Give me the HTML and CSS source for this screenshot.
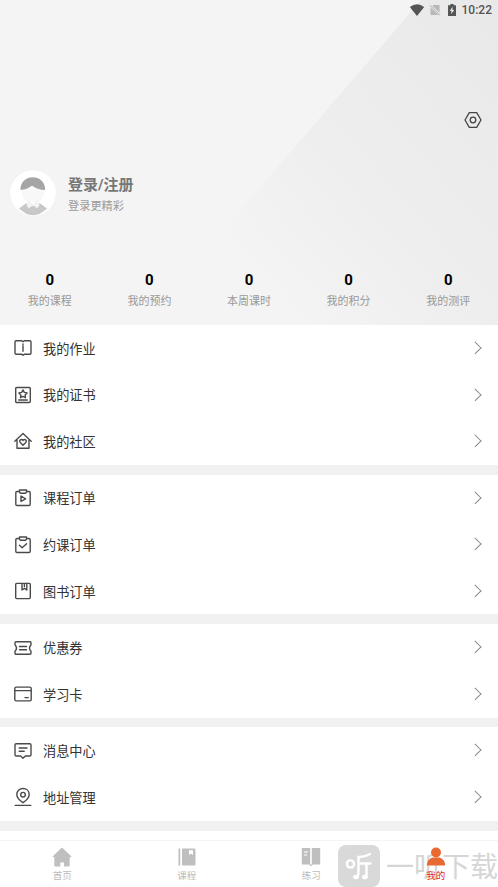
FILE: index.html
```html
<!DOCTYPE html>
<html lang="zh-CN">
<head>
<meta charset="utf-8">
<title>我的</title>
<link rel="stylesheet" href="styles.css">
</head>
<body>
<div class="app">
  <header class="hero">
    <svg class="hero-bg" viewBox="0 0 498 325" preserveAspectRatio="none">
      <defs><linearGradient id="shade" gradientUnits="userSpaceOnUse" x1="498" y1="20" x2="235" y2="255"><stop offset="0" stop-color="#e9e9e9"/><stop offset=".6" stop-color="#eeeeee"/><stop offset="1" stop-color="#f4f4f4"/></linearGradient></defs>
      <path d="M421 0H498V325H142Z" fill="url(#shade)"/>
    </svg>
    <div class="status">
      <svg class="wifi" viewBox="0 0 16 12"><path d="M.8 3Q8-2.4 15.2 3L8 11.9Z" fill="#555"/></svg>
      <svg class="sim" viewBox="0 0 12 12"><path d="M4.5 1H10.5V8.8L3.2 1.7ZM1.5 3.4L9.3 11H1.5Z" fill="#b8b8b8"/><path d="M.8 1L11 11.5" stroke="#aaa"/></svg>
      <svg class="battery" viewBox="0 0 8 12"><path d="M2.4 0H5.6V1.2H8V12H0V1.2H2.4Z" fill="#555"/><path d="M4.7 2.8L1.8 6.8H3.6L3.2 10L6.2 5.9H4.4Z" fill="#f5f5f5"/></svg>
      <span>10:22</span>
    </div>
    <div class="tools">
      <svg class="gear" viewBox="0 0 18 18" fill="none" stroke="#444" stroke-width="1.3" stroke-linejoin="round"><path d="M5.3 1.6H12.7L17 9L12.7 16.4H5.3L1 9Z"/><circle cx="9" cy="9" r="2.8"/></svg>
    </div>
    <div class="profile">
      <svg class="avatar" viewBox="0 0 46 46"><circle cx="23" cy="23" r="22.8" fill="#fff"/><path d="M12 18V24Q13 30 19 32H27Q33 30 34 24V18Z" fill="#f8f8f8"/><path d="M10.5 20C10 3 35.5 3 35.2 20C30 20 25.5 18.5 22 15.8C19 18 15 20 10.5 20Z" fill="#a5a5a5"/><path d="M16.5 33L23 36L29.5 33L37 38.5Q30 45.3 23 45.3T9 38.5Z" fill="#c8c8c8"/><path d="M17.6 30L23 34L28.4 30L29.5 35L27.4 38.5L23 35.3L18.7 38.5L16.5 35Z" fill="#f3f3f3"/></svg>
      <div class="who"><div class="login">登录/注册</div><div class="hint">登录更精彩</div></div>
    </div>
    <div class="stats">
      <div><b>0</b><span>我的课程</span></div>
      <div><b>0</b><span>我的预约</span></div>
      <div><b>0</b><span>本周课时</span></div>
      <div><b>0</b><span>我的积分</span></div>
      <div><b>0</b><span>我的测评</span></div>
    </div>
  </header>
  <main>
    <section class="group">
      <div class="row"><svg class="icon" viewBox="0 0 20 20"><path d="M10 3.7L8.8 2.8H3.2Q2 2.8 2 4V15Q2 16.2 3.2 16.2H8.4L10 17.2L11.6 16.2H16.8Q18 16.2 18 15V4Q18 2.8 16.8 2.8H11.2ZM10 6V6.8M10 8V13.2"/></svg><span>我的作业</span><i class="arrow"></i></div>
      <div class="row"><svg class="icon" viewBox="0 0 20 20"><rect x="2.7" y="2.5" width="14.6" height="15" rx="1"/><path d="M10 4.9L11.3 7.4L14.1 7.9L12.1 9.9L12.5 12.7L10 11.4L7.5 12.7L7.9 9.9L5.9 7.9L8.7 7.4ZM5.7 15H14.3"/></svg><span>我的证书</span><i class="arrow"></i></div>
      <div class="row"><svg class="icon" viewBox="0 0 20 20"><path d="M1.8 10.2L10 2.5L18.2 10.2M4 8.8V17.3H16V8.8M10 14.2L7.2 11.4C5.5 9.4 8.4 7.4 10 9.4C11.6 7.4 14.5 9.4 12.8 11.4Z"/></svg><span>我的社区</span><i class="arrow"></i></div>
    </section>
    <section class="group">
      <div class="row"><svg class="icon" viewBox="0 0 20 20"><path d="M6.2 3.5H4Q2.8 3.5 2.8 4.7V16.3Q2.8 17.5 4 17.5H16Q17.2 17.5 17.2 16.3V4.7Q17.2 3.5 16 3.5H13.8M6.5 2H13.5V4.3L12.5 5.2H7.5L6.5 4.3ZM8 8V13.5L12.6 10.8Z"/></svg><span>课程订单</span><i class="arrow"></i></div>
      <div class="row"><svg class="icon" viewBox="0 0 20 20"><path d="M6.2 3.5H4Q2.8 3.5 2.8 4.7V16.3Q2.8 17.5 4 17.5H16Q17.2 17.5 17.2 16.3V4.7Q17.2 3.5 16 3.5H13.8M6.5 2H13.5V4.3L12.5 5.2H7.5L6.5 4.3ZM6.5 10.3L9.1 12.8L13.6 8.7"/></svg><span>约课订单</span><i class="arrow"></i></div>
      <div class="row"><svg class="icon" viewBox="0 0 20 20"><rect x="2.7" y="2.4" width="14.6" height="15.2" rx="1"/><path d="M9 2.4V9L11.4 7.4L13.8 9V2.4M11.4 3V5.5"/></svg><span>图书订单</span><i class="arrow"></i></div>
    </section>
    <section class="group">
      <div class="row"><svg class="icon" viewBox="0 0 20 20"><path d="M3 3.7H17Q18 3.7 18 4.8V6.7Q15 10 18 13.3V15.2Q18 16.3 17 16.3H3Q2 16.3 2 15.2V13.3Q5 10 2 6.7V4.8Q2 3.7 3 3.7ZM6.5 8.5H13.5M6.5 11.7H13.5"/></svg><span>优惠券</span><i class="arrow"></i></div>
      <div class="row"><svg class="icon" viewBox="0 0 20 20"><rect x="1.8" y="3.1" width="16.4" height="13.8" rx="1.4"/><path d="M2 6.6H18M12 13.6H15.2"/></svg><span>学习卡</span><i class="arrow"></i></div>
    </section>
    <section class="group">
      <div class="row"><svg class="icon" viewBox="0 0 20 20"><path d="M3.2 2.8H16.8Q18 2.8 18 4V13.8Q18 15 16.8 15H12.4L10 17.2L7.6 15H3.2Q2 15 2 13.8V4Q2 2.8 3.2 2.8ZM6.2 7H14M6.2 10.3H11.2"/></svg><span>消息中心</span><i class="arrow"></i></div>
      <div class="row"><svg class="icon" viewBox="0 0 20 20"><path d="M10 15.7C6 13 3.8 10.8 3.8 7.5C3.8 4 6.4 1.5 10 1.5S16.2 4 16.2 7.5C16.2 10.8 14 13 10 15.7ZM2.2 18.4H17.8"/><circle cx="10" cy="7.7" r="2.3"/></svg><span>地址管理</span><i class="arrow"></i></div>
    </section>
    <section class="group rest"></section>
  </main>
  <nav class="tabs">
    <div class="tab"><svg viewBox="0 0 20 20"><path d="M10 .5L19.5 9.5L18.5 10.5L17.7 9.8V18.5Q17.7 19.5 16.7 19.5H12V15.5H8.3V19.5H3.3Q2.3 19.5 2.3 18.5V9.8L1.5 10.5L.5 9.5Z"/></svg><span>首页</span></div>
    <div class="tab"><svg viewBox="0 0 20 20"><path d="M1.5 1.5H3.2V18.5H1.5ZM5 2.5Q5 1.5 6 1.5H17.2Q18.5 1.5 18.5 2.8V17.2Q18.5 18.5 17.2 18.5H6Q5 18.5 5 17.5Z"/><path d="M12 3.3H16V8L14 6.6L12 8Z" fill="#fff"/></svg><span>课程</span></div>
    <div class="tab"><svg viewBox="0 0 20 20"><path d="M.8 1H9.2V17.5H.8ZM10.8 1H19.2V17.5H12L10 19.3L8 17.5H10.8Z"/><path d="M3 5H7M3 8H6" stroke="#fff" stroke-width="1.2"/></svg><span>练习</span></div>
    <div class="tab active"><svg viewBox="0 0 20 20"><circle cx="10" cy="5.5" r="5"/><path d="M6.5 10.4H13.5Q19.2 12.4 19.2 18.6H.8Q.8 12.4 6.5 10.4Z"/></svg><span>我的</span></div>
  </nav>
  <div class="watermark">
    <svg viewBox="0 0 42 42"><rect width="42" height="42" rx="8" fill="#d9d9d9"/><g fill="none" stroke="#fff" stroke-width="2.4" stroke-linecap="round"><circle cx="12.5" cy="19" r="3.6"/><path d="M32 9Q26 12.5 20.5 12V25Q20.5 30 19.5 32M21 18.5H32.5M28.5 19V32"/></g><ellipse cx="18" cy="32" rx="2.8" ry="2.3" fill="#fff"/><ellipse cx="26.8" cy="32" rx="2.8" ry="2.3" fill="#fff"/></svg>
    <span>一听下载</span>
  </div>
</div>
</body>
</html>
```
FILE: styles.css
```css
* { box-sizing: border-box; }
body { margin: 0; font-family: Roboto, "Noto Sans CJK SC", sans-serif; background: #fff; }
.app { position: relative; width: 498px; height: 887px; overflow: hidden; display: flex; flex-direction: column; isolation: isolate; }
.hero { position: relative; height: 325px; flex: none; background: #f4f4f4; isolation: isolate; }
.hero-bg { position: absolute; inset: 0; width: 100%; height: 100%; z-index: -1; }
.status { height: 20px; display: flex; align-items: center; justify-content: flex-end; padding-right: 6px; font-size: 12px; font-weight: 500; color: #555; }
.wifi { width: 16px; height: 12px; margin-right: 4px; }
.sim { width: 12px; height: 12px; margin-right: 7px; }
.battery { width: 8px; height: 12px; margin-right: 6px; }
.tools { display: flex; justify-content: flex-end; padding: 91px 16px 0 0; }
.gear { width: 18px; height: 18px; }
.profile { display: flex; align-items: center; gap: 12px; padding: 41px 0 0 10px; height: 87px; }
.avatar { width: 46px; height: 46px; flex: none; }
.who { padding-top: 5px; }
.login { font-size: 15px; line-height: 22px; font-weight: 700; color: #777; }
.hint { font-size: 11.2px; line-height: 21px; color: #999; }
.stats { display: grid; grid-template-columns: repeat(5, 1fr); padding-top: 54px; text-align: center; }
.stats b { display: block; font-size: 15px; line-height: 20px; color: #000; }
.stats span { display: block; font-size: 11px; line-height: 24px; color: #999; }
main { flex: 1; min-height: 0; background: #f1f1f1; display: flex; flex-direction: column; gap: 9.9px; }
.group { flex: none; background: #fff; }
.rest { flex: 1; }
.row { height: 46.6px; display: flex; align-items: center; padding: 0 19px 0 13px; font-size: 13.2px; color: #333; }
.icon { width: 20px; height: 20px; margin-right: 10px; fill: none; stroke: #4a4a4a; stroke-width: 1.4; stroke-linejoin: round; stroke-linecap: round; }
.arrow { width: 8.5px; height: 8.5px; margin-left: auto; border: solid #888; border-width: 1.2px 1.2px 0 0; transform: translateY(-.7px) rotate(45deg); }
.tabs { height: 47px; flex: none; border-top: 1px solid #f4f4f4; display: grid; grid-template-columns: repeat(4, 1fr); }
.tab { display: flex; flex-direction: column; align-items: center; padding-top: 6px; font-size: 9.5px; line-height: 15px; color: #bbb; }
.tab svg { width: 20px; height: 20px; margin-bottom: 1px; fill: #bfbfbf; }
.tab.active { color: #e0261c; }
.tab.active svg { fill: #e86a32; }
.watermark { position: absolute; left: 338px; top: 845px; display: flex; align-items: center; gap: 6px; height: 42px; font-size: 28px; line-height: 42px; color: #d6d6d6; white-space: nowrap; z-index: -1; }
.watermark svg { width: 42px; height: 42px; flex: none; }
.watermark span { padding-top: 3px; }
```
